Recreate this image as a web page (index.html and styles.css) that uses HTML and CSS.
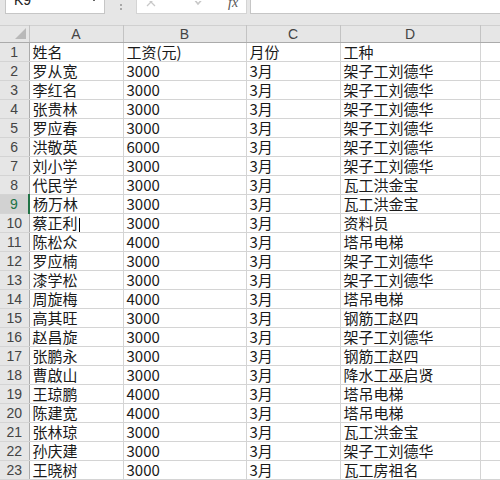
FILE: index.html
```html
<!DOCTYPE html>
<html lang="zh-CN">
<head>
    <meta charset="UTF-8">
    <title>工资表</title>
    <link rel="stylesheet" href="styles.css">
</head>
<body>
    <div class="formula-bar">
        <div class="name-box">
            <span class="cell-ref">K9</span>
            <svg class="drop" width="8" height="6" viewBox="0 0 8 6"><path d="M1 1 L4 4 L7 1" fill="none" stroke="#666" stroke-width="1"/></svg>
        </div>
        <div class="grip"><i></i><i></i></div>
        <div class="fx-box">
            <svg class="fx-icon cancel" width="14" height="10" viewBox="0 0 14 10"><path d="M2 -3 L10 5 M10 -3 L2 5" stroke="#c8c8c8" stroke-width="1.3"/></svg>
            <svg class="fx-icon enter" width="14" height="10" viewBox="0 0 14 10"><path d="M1 -2 L5 3 L13 -6" fill="none" stroke="#c8c8c8" stroke-width="1.6"/></svg>
            <span class="fx">fx</span>
        </div>
        <div class="formula-input"></div>
    </div>
    <div class="gap"></div>

    <table class="sheet">
        <colgroup>
            <col class="c-head"><col class="c-a"><col class="c-b"><col class="c-c"><col class="c-d"><col class="c-e">
        </colgroup>
        <thead>
            <tr>
                <th class="corner"><span class="tri"></span></th>
                <th>A</th><th>B</th><th>C</th><th>D</th><th></th>
            </tr>
        </thead>
        <tbody id="rows"></tbody>
    </table>

    <script>
        const data = [
            ['姓名', '工资(元)', '月份', '工种'],
            ['罗从宽', '3000', '3月', '架子工刘德华'],
            ['李红名', '3000', '3月', '架子工刘德华'],
            ['张贵林', '3000', '3月', '架子工刘德华'],
            ['罗应春', '3000', '3月', '架子工刘德华'],
            ['洪敬英', '6000', '3月', '架子工刘德华'],
            ['刘小学', '3000', '3月', '架子工刘德华'],
            ['代民学', '3000', '3月', '瓦工洪金宝'],
            ['杨万林', '3000', '3月', '瓦工洪金宝'],
            ['蔡正利', '3000', '3月', '资料员'],
            ['陈松众', '4000', '3月', '塔吊电梯'],
            ['罗应楠', '3000', '3月', '架子工刘德华'],
            ['漆学松', '3000', '3月', '架子工刘德华'],
            ['周旋梅', '4000', '3月', '塔吊电梯'],
            ['高其旺', '3000', '3月', '钢筋工赵四'],
            ['赵昌旋', '3000', '3月', '架子工刘德华'],
            ['张鹏永', '3000', '3月', '钢筋工赵四'],
            ['曹啟山', '3000', '3月', '降水工巫启贤'],
            ['王琼鹏', '4000', '3月', '塔吊电梯'],
            ['陈建宽', '4000', '3月', '塔吊电梯'],
            ['张林琼', '3000', '3月', '瓦工洪金宝'],
            ['孙庆建', '3000', '3月', '架子工刘德华'],
            ['王晓树', '3000', '3月', '瓦工房祖名']
        ];

        const tbody = document.getElementById('rows');
        data.forEach((row, i) => {
            const tr = document.createElement('tr');
            const num = document.createElement('td');
            num.className = 'row-num' + (i === 8 ? ' active' : '');
            num.textContent = i + 1;
            tr.appendChild(num);
            row.forEach(val => {
                const td = document.createElement('td');
                td.textContent = val;
                tr.appendChild(td);
            });
            tr.appendChild(document.createElement('td'));
            tbody.appendChild(tr);
        });

        // mouse I-beam next to 蔡正利
        const cell = tbody.rows[9].cells[1];
        const beam = document.createElement('span');
        beam.className = 'ibeam';
        cell.appendChild(beam);
    </script>
</body>
</html>
```

FILE: styles.css
```css
html, body {
    margin: 0;
    padding: 0;
    overflow: hidden;
}

body {
    width: 500px;
    height: 480px;
    background: #fff;
    font-family: "Noto Sans CJK SC", "Microsoft YaHei", sans-serif;
    color: #1a1a1a;
}

/* formula bar, scrolled so only its bottom edge shows */
.formula-bar {
    display: flex;
    align-items: flex-end;
    height: 14px;
    overflow: hidden;
    background: #e6e6e6;
}

.name-box {
    position: relative;
    width: 100px;
    height: 22px;
    margin-left: 5px;
    background: #fff;
    border: 1px solid #c6c6c6;
    box-sizing: border-box;
    display: flex;
    align-items: flex-end;
    justify-content: space-between;
    padding: 0 6px 6px 8px;
}

.cell-ref {
    font-size: 14px;
    line-height: 14px;
    color: #222;
    font-family: "Liberation Sans", sans-serif;
}

.drop {
    margin-bottom: 4px;
}

.grip {
    width: 31px;
    height: 14px;
    display: flex;
    flex-direction: column;
    align-items: center;
    justify-content: flex-end;
    gap: 2px;
    padding-bottom: 4px;
    box-sizing: border-box;
}

.grip i {
    width: 2px;
    height: 2px;
    background: #a8a8a8;
}

.fx-box {
    width: 111px;
    height: 22px;
    background: #fff;
    border: 1px solid #d4d4d4;
    box-sizing: border-box;
    display: flex;
    align-items: flex-start;
    padding: 8px 6px 0 8px;
}

.fx-icon {
    display: block;
}

.fx-icon.enter {
    margin-left: 34px;
}

.fx {
    font-family: "Liberation Serif", serif;
    font-style: italic;
    font-size: 14px;
    line-height: 10px;
    margin-top: -3px;
    margin-left: 21px;
    color: #555;
}

.formula-input {
    flex: 1;
    height: 22px;
    margin-left: 3px;
    background: #fff;
    border: 1px solid #c6c6c6;
    border-right: none;
    box-sizing: border-box;
}

.gap {
    height: 11px;
    background: #e6e6e6;
}

/* grid */
.sheet {
    border-collapse: collapse;
    table-layout: fixed;
    width: 520px;
    background: #fff;
    font-size: 15px;
}

.c-head { width: 29px; }
.c-a { width: 94px; }
.c-b { width: 123px; }
.c-c { width: 94px; }
.c-d { width: 140px; }
.c-e { width: 40px; }

.sheet th {
    height: 16px;
    padding: 0;
    background: #e6e6e6;
    border-top: 1px solid #d0d0d0;
    border-right: 1px solid #c3c3c3;
    border-bottom: 1px solid #ababab;
    font-weight: normal;
    font-size: 14px;
    line-height: 15px;
    color: #444;
    font-family: "Liberation Sans", sans-serif;
    text-align: center;
}

.sheet th.corner {
    position: relative;
}

.tri {
    position: absolute;
    right: 3px;
    bottom: 3px;
    width: 0;
    height: 0;
    border-left: 11px solid transparent;
    border-bottom: 11px solid #b9b9b9;
}

.sheet td {
    height: 18px;
    padding: 0 0 0 3px;
    border-right: 1px solid #d4d4d4;
    border-bottom: 1px solid #d4d4d4;
    line-height: 18px;
    white-space: nowrap;
    overflow: hidden;
    position: relative;
}

.sheet td.row-num {
    padding: 0;
    background: #e6e6e6;
    border-right: 1px solid #ababab;
    border-bottom: 1px solid #d4d4d4;
    text-align: center;
    color: #444;
    font-family: "Liberation Sans", sans-serif;
    font-size: 14px;
}

.sheet td.row-num.active {
    background: #d2d2d2;
    border-right: 2px solid #217346;
    color: #217346;
}

.ibeam {
    display: inline-block;
    width: 1px;
    height: 14px;
    background: #000;
    vertical-align: middle;
    margin-left: 1px;
}
```
